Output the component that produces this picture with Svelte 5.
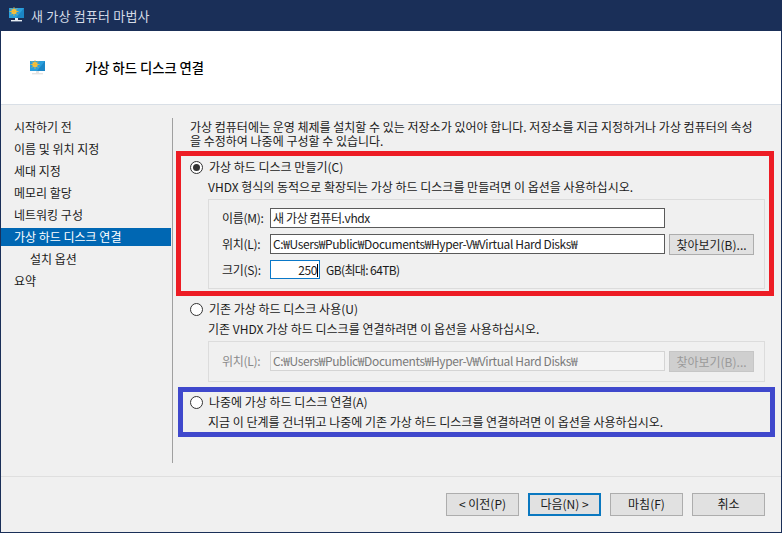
<script>
  const steps = [
    { label: '시작하기 전' },
    { label: '이름 및 위치 지정' },
    { label: '세대 지정' },
    { label: '메모리 할당' },
    { label: '네트워킹 구성' },
    { label: '가상 하드 디스크 연결', active: true },
    { label: '설치 옵션', sub: true },
    { label: '요약' }
  ];
  const path = 'C:₩Users₩Public₩Documents₩Hyper-V₩Virtual Hard Disks₩';
</script>

{#snippet monitor()}
  <svg width="20" height="18" viewBox="0 0 20 18" aria-hidden="true">
    <rect x="1" y="1" width="15" height="10" fill="#2a9fdc" />
    <path d="M8 11L16 1V11Z" fill="#1b86c6" />
    <circle cx="6" cy="4.5" r="2.6" fill="#f7c948" />
    <path d="M6 0v9M1.5 4.5h9M2.8 1.3l6.4 6.4M9.2 1.3l-6.4 6.4" stroke="#f2b632" stroke-width="0.8" />
    <rect x="7" y="11" width="3" height="2" fill="currentColor" />
    <rect x="3" y="13" width="11" height="1.4" fill="currentColor" />
  </svg>
{/snippet}

<div class="window">
  <header class="titlebar">
    <span class="title-icon">{@render monitor()}</span>
    <span class="title-text">새 가상 컴퓨터 마법사</span>
  </header>

  <section class="banner">
    <span class="banner-icon">{@render monitor()}</span>
    <h1>가상 하드 디스크 연결</h1>
  </section>

  <div class="body">
    <nav class="steps">
      {#each steps as s}
        <div class="step" class:active={s.active} class:sub={s.sub}>{s.label}</div>
      {/each}
    </nav>
    <div class="sep"></div>

    <main class="content">
      <p class="intro">가상 컴퓨터에는 운영 체제를 설치할 수 있는 저장소가 있어야 합니다. 저장소를 지금 지정하거나 가상 컴퓨터의 속성<br />을 수정하여 나중에 구성할 수 있습니다.</p>

      <div class="option create">
        <div class="radio-row"><span class="radio checked"></span><span>가상 하드 디스크 만들기(C)</span></div>
        <p class="desc">VHDX 형식의 동적으로 확장되는 가상 하드 디스크를 만들려면 이 옵션을 사용하십시오.</p>
        <div class="group">
          <div class="field">
            <span class="lab">이름(M):</span>
            <div class="input">새 가상 컴퓨터.vhdx</div>
          </div>
          <div class="field">
            <span class="lab">위치(L):</span>
            <div class="input">{path}</div>
            <div class="btn browse">찾아보기(B)...</div>
          </div>
          <div class="field">
            <span class="lab">크기(S):</span>
            <div class="input size">250<i class="caret"></i></div>
            <span class="unit">GB(최대: 64TB)</span>
          </div>
        </div>
      </div>

      <div class="option next">
        <div class="radio-row"><span class="radio"></span><span>기존 가상 하드 디스크 사용(U)</span></div>
        <p class="desc">기존 VHDX 가상 하드 디스크를 연결하려면 이 옵션을 사용하십시오.</p>
        <div class="group disabled">
          <div class="field">
            <span class="lab">위치(L):</span>
            <div class="input off">{path}</div>
            <div class="btn browse off">찾아보기(B)...</div>
          </div>
        </div>
      </div>

      <div class="option next">
        <div class="radio-row"><span class="radio"></span><span>나중에 가상 하드 디스크 연결(A)</span></div>
        <p class="desc">지금 이 단계를 건너뛰고 나중에 기존 가상 하드 디스크를 연결하려면 이 옵션을 사용하십시오.</p>
      </div>
    </main>
  </div>

  <footer class="footer">
    <div class="btn act">&lt; 이전(P)</div>
    <div class="btn act primary">다음(N) &gt;</div>
    <div class="btn act">마침(F)</div>
    <div class="btn act">취소</div>
  </footer>

  <div class="mark red"></div>
  <div class="mark blue"></div>
</div>

<style>
  :global(body) { margin: 0; }
  .window {
    position: relative;
    width: 782px;
    height: 533px;
    box-sizing: border-box;
    display: flex;
    flex-direction: column;
    background: #f0f0f0;
    border: solid #1a2f58;
    border-width: 0 1px 1px;
    font: 12px/16px "Noto Sans CJK KR", "Liberation Sans", sans-serif;
    color: #1a1a1a;
    overflow: hidden;
  }
  .titlebar {
    height: 31px;
    flex: none;
    margin: 0 -1px;
    padding-left: 8px;
    display: flex;
    align-items: center;
    gap: 3px;
    background: #1a2f58;
    color: #d5dbe6;
  }
  .title-icon { display: flex; color: #e6edf4; }
  .title-text { font-size: 13px; letter-spacing: 0.2px; }
  .banner {
    height: 74px;
    flex: none;
    box-sizing: border-box;
    display: flex;
    align-items: center;
    padding-left: 28px;
    background: #fff;
    border-bottom: 1px solid #d9dfe6;
  }
  .banner-icon { display: flex; width: 56px; margin-top: 3px; color: #e4e4e4; }
  h1 { margin: 0; font-size: 13.3px; font-weight: 500; color: #000; }
  .body { flex: 1; display: flex; min-height: 0; }
  .steps { width: 171px; flex: none; padding-top: 11px; }
  .sep { width: 1px; flex: none; margin: 13px 0; background: #a0a0a0; }
  .step { height: 22px; line-height: 21px; padding-left: 13px; margin-right: 1px; }
  .step.active { background: #0067b3; color: #fff; height: 18px; line-height: 17px; margin: 2px 1px 2px 0; }
  .step.sub { padding-left: 29px; }
  .content { flex: 1; padding: 15px 0 0 17px; min-width: 0; }
  .intro { margin: 0; line-height: 14px; white-space: nowrap; }
  .create { margin-top: 11px; }
  .next { margin-top: 12px; }
  .radio-row { display: flex; align-items: center; gap: 6px; height: 16px; }
  .radio {
    width: 11px;
    height: 11px;
    border: 1px solid #333;
    border-radius: 50%;
    background: #fff;
    position: relative;
    flex: none;
  }
  .radio.checked::after {
    content: '';
    position: absolute;
    inset: 2px;
    border-radius: 50%;
    background: #333;
  }
  .desc { margin: 0; padding: 4px 0 0 18px; height: 16px; white-space: nowrap; }
  .group {
    margin: 4px 0 0 18px;
    width: 557px;
    box-sizing: border-box;
    height: 90px;
    padding: 8px 0 0 13px;
    border: 1px solid #dcdcdc;
    display: flex;
    flex-direction: column;
    gap: 6px;
  }
  .group.disabled { height: 41px; padding-top: 9px; color: #8a8a8a; }
  .field { display: flex; align-items: flex-start; height: 20px; line-height: 19px; }
  .lab { width: 48px; flex: none; letter-spacing: -0.3px; }
  .input {
    width: 395px;
    height: 20px;
    box-sizing: border-box;
    background: #fff;
    border: 1px solid #5a5a5a;
    padding-left: 2px;
    line-height: 17px;
    white-space: nowrap;
    color: #222;
    letter-spacing: -0.38px;
  }
  .input.size {
    width: 50px;
    height: 19px;
    border-color: #0a78c8;
    text-align: right;
    padding-right: 1px;
  }
  .caret { display: inline-block; width: 1px; height: 13px; background: #000; vertical-align: -2px; }
  .unit { margin-left: 6px; letter-spacing: -0.6px; }
  .input.off { background: #f4f4f4; border-color: #d4d4d4; color: #7a7a7a; }
  .btn {
    box-sizing: border-box;
    background: #e1e1e1;
    border: 1px solid #adadad;
    text-align: center;
    color: #1a1a1a;
  }
  .browse { width: 85px; height: 21px; line-height: 19px; margin-left: 4px; }
  .browse.off { background: #cfcfcf; border-color: #c6c6c6; color: #9a9a9a; }
  .footer {
    height: 56px;
    flex: none;
    box-sizing: border-box;
    border-top: 1px solid #dfdfdf;
    display: flex;
    justify-content: flex-end;
    align-items: flex-start;
    padding: 16px 16px 0 0;
    gap: 9px;
  }
  .act { width: 73px; height: 23px; line-height: 20px; }
  .primary { border: 2px solid #0a78c0; line-height: 18px; }
  .mark { position: absolute; box-sizing: border-box; pointer-events: none; }
  .red { left: 175px; top: 151px; width: 598px; height: 145px; border: 5px solid #ed1c24; }
  .blue { left: 177px; top: 387px; width: 597px; height: 50px; border: 5px solid #3f48cc; }
</style>
